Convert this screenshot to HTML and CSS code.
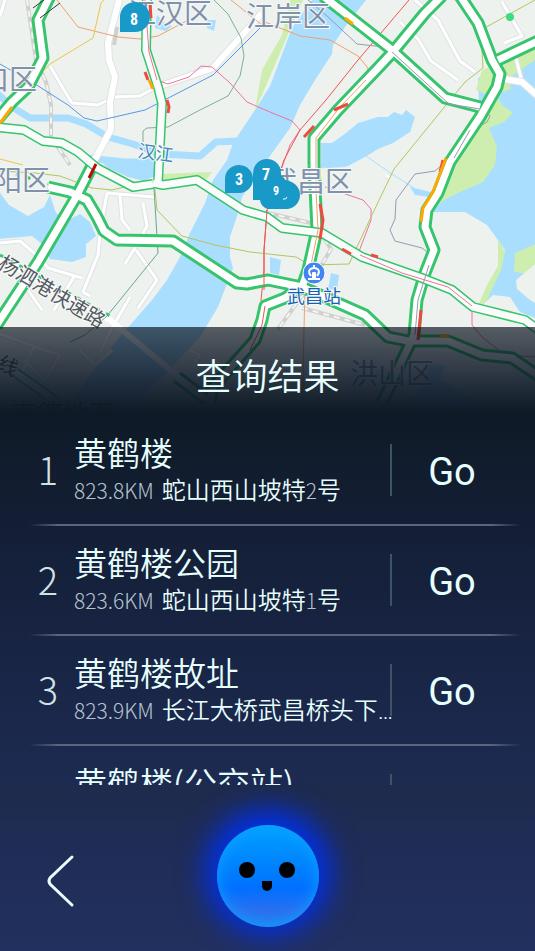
FILE: index.html
```
<!DOCTYPE html>
<html lang="zh-CN">
<head>
    <meta charset="utf-8">
    <meta name="viewport" content="width=device-width, initial-scale=1">
    <title>查询结果</title>
    <link rel="stylesheet" href="styles.css">
</head>
<body>
    <div class="screen">
        <svg class="map" viewBox="0 0 535 420" preserveAspectRatio="xMidYMin slice" role="img" aria-label="武汉地图">
            <defs>
                <g id="roads">
                    <path d="M50 -4L38 20L43 58L28 87L12 102L-4 121"/>
                    <path d="M-4 322L38 258L75 195L93 160" transform="translate(0 4)"/>
                    <path d="M48 187L70 192L87 200L97 217L104 231L117 240L173 241L237 283L247 284L268 280L302 287L365 315L388 337L408 341L448 341L482 355L512 358L540 377"/>
                    <path d="M314 165L317 230L308 270L302 287L285 298L265 306L262 320L255 340L213 387L210 403"/>
                    <path d="M442 -4L425 13L392 53L378 68L338 110L314 138L314 165"/>
                    <path d="M323 -4L392 50L445 98L480 107"/>
                    <path d="M540 40L498 60"/>
                    <path d="M460 -4L478 23L492 60L500 74L497 87L480 117L450 162L438 193L427 210L425 227L434 250L425 273L417 300L414 335L382 403"/>
                    <path d="M177 377L207 400"/>
                </g>
                <g id="streets">
                    <path d="M-4 127L24 130L43 141L62 143L78 152L97 168L133 187L153 184"/>
                    <path d="M153 183L163 185L197 180L243 210L267 217L282 228L322 233L362 257L422 278L452 290L473 307L525 320L540 331"/>
                    <path d="M147 -4L146 50L158 87L162 103L158 182"/>
                    <path d="M12 370L57 402"/>
                </g>
            </defs>
            <rect class="land" width="535" height="420"/>

            <path class="park" d="M303 0L292 25L265 88L255 110L262 70L282 35L290 0z"/>
            <path class="park" d="M160 174L212 172L205 181L190 180L165 184z"/>
            <path class="water" d="M366 0L345 27L333 45L332 54L315 80L300 105L290 128L265 163L242 197L238 213L230 237L230 257L233 268L218 307L200 337L140 400L128 420L60 420L77 393L117 340L152 300L167 280L180 257L190 233L205 203L213 180L227 160L233 143L255 110L270 86L292 28L312 0z"/>
            <path class="stream" d="M-2 94L12 107L30 118L68 118L86 124L108 137L133 144L160 154L200 156L216 142L238 141"/>
            <path class="stream" d="M86 158L125 162L160 162"/>
            <path class="water" d="M321 143L332 143L346 133L358 123L378 117L388 117L394 112L402 115L406 110L415 117L410 132L393 143L378 149L365 157L348 166L321 168z"/>
            <path class="brook" d="M366 156L392 174L414 188"/>
            <path class="water" d="M410 187L431 192L430 197L415 195z"/>
            <path class="water" d="M478 78L535 50L535 420L520 420L520 320L482 305L498 270L505 250L498 240L487 225L465 212L433 212L442 197L482 180z"/>
            <path class="park" d="M535 48L498 64L482 70L476 90L491 96L472 132L450 163L438 194L433 211L442 201L458 193L483 182L495 165L497 147L489 128L504 122L513 113L502 105L496 94L511 89L509 78L535 60z"/>
            <path class="park" d="M498 239L505 252L501 270L486 302L478 306L487 285L498 266z"/>
            <path class="park" d="M540 242L515 253L514 272L540 275z"/>
            <path class="land" d="M540 260L516 280L517 289L530 300L540 306z"/>
            <path class="land" d="M480 307L493 295L510 297L520 312L540 320L540 420L485 420z"/>
            <path class="water" d="M-2 190L9 205L28 216L44 207L50 195L56 213L68 220L80 214L90 222L96 236L86 244L86 257L72 262L50 259L42 244L32 236L-2 239z"/>
            <path class="water" d="M99 160L160 160L157 175L144 181L128 177L108 168z"/>
            <path class="water" d="M157 15L164 22L172 26L166 31L155 28z"/>
            <path class="water" d="M207 20L216 20L214 31L207 28z"/>
            <path class="water" d="M323 160L358 160L345 167L326 168z"/>
            <path class="water" d="M270 257L281 260L279 275L270 273z"/>
            <path class="water" d="M331 273L339 275L337 290L328 289z"/>
            <path class="water" d="M429 363L445 366L440 380L455 388L487 408L420 415L404 402L423 388z"/>

            <g class="lane-edge">
                <path d="M0 243L20 241L40 258L48 268L82 278M107 193L100 232L98 255L83 292L90 296M75 275L54 310M28 290L42 310M120 195L122 220L130 230M143 203L147 226L136 246L125 264M136 250L150 270L157 280L138 308M130 297L112 328L100 352M5 0L0 16M50 66L64 90L72 103L98 105L114 97L140 96L165 82M107 193L154 197"/>
                <path d="M400 22L418 39L431 61L458 80M415 0L438 20L460 61L475 72M502 2L522 36L504 43M516 58L521 78L510 82M390 178L386 175"/>
                <path d="M0 334L30 345L60 355L45 380L23 360M35 345L18 380M80 350L95 365L112 350M190 350L200 355L192 368"/>
            </g>
            <g class="lane">
                <path d="M0 243L20 241L40 258L48 268L82 278M107 193L100 232L98 255L83 292L90 296M75 275L54 310M28 290L42 310M120 195L122 220L130 230M143 203L147 226L136 246L125 264M136 250L150 270L157 280L138 308M130 297L112 328L100 352M5 0L0 16M50 66L64 90L72 103L98 105L114 97L140 96L165 82M107 193L154 197"/>
                <path d="M400 22L418 39L431 61L458 80M415 0L438 20L460 61L475 72M502 2L522 36L504 43M516 58L521 78L510 82M390 178L386 175"/>
                <path d="M0 334L30 345L60 355L45 380L23 360M35 345L18 380M80 350L95 365L112 350M190 350L200 355L192 368"/>
            </g>
            <path class="avenue-edge" d="M120 -4L108 43L109 60L115 77L110 102L111 129L92 165M160 86L213 68L262 13M498 78L522 82L540 98"/>
            <path class="avenue" d="M120 -4L108 43L109 60L115 77L110 102L111 129L92 165M160 86L213 68L262 13M498 78L522 82L540 98"/>
            <path class="avenue" d="M-4 256L110 320L180 378"/>

            <path class="rail" d="M27 0L36 60L46 82L51 105L51 137L70 165"/>
            <path class="rail-dash" d="M27 0L36 60L46 82L51 105L51 137L70 165"/>
            <path class="rail" d="M117 27L114 45"/>
            <path class="rail" d="M268 213L315 224L331 249L310 285L278 329M302 308L365 325"/>
            <path class="rail-dash" d="M268 213L315 224L331 249L310 285L278 329M302 308L365 325"/>

            <g class="metro">
                <path class="orange" d="M57 0L78 27L118 37L140 39L158 36L194 17M231 0L262 25M265 22L300 36L330 40L358 56L368 68L366 80L340 107L315 140L314 190L316 230L305 285L302 420"/>
                <path class="gold" d="M106 -2L101 3L93 38L50 64L0 116M0 159L23 165"/>
                <path class="teal" d="M214 0L228 14L241 38L244 56L240 76L228 96L198 111L168 127L147 128L143 131L143 142"/>
                <path class="blue" d="M0 64L35 84L68 105L84 118L97 121L145 110L213 75L262 26"/>
                <path class="pink" d="M143 0L147 50L156 80L168 84L189 77L201 66L212 67L230 83L247 102L270 112L292 121L300 130L290 145L281 170"/>
                <path class="pink" d="M325 187L363 200L371 209L371 220L358 254L402 274L448 288L472 306L472 325L482 337L505 355L535 357"/>
                <path class="red" d="M409 0L358 60L326 100L300 130L284 160L267 210L264 250L264 270L261 300L265 315L255 350"/>
                <path class="olive" d="M0 171L35 173L60 176L92 188L112 190L145 182L155 190L157 210L182 236L215 245L250 252L296 257L310 265L349 264L371 217L394 169L442 110L465 82L483 68L481 30L535 0"/>
                <path class="green" d="M154 188L158 253L107 316L85 335L70 342"/>
                <path class="gray" d="M308 0L327 16L357 44L375 46L391 47L410 63L449 104L484 109L490 116L487 122L468 133L450 158L435 171L415 174L396 200L395 219L390 230L395 241L422 248L430 254L425 272L417 300L414 335"/>
            </g>

            <use class="green-edge" href="#roads"/>
            <use class="road" href="#roads"/>
            <use class="street-edge" href="#streets"/>
            <use class="street" href="#streets"/>
            <g class="metro">
                <path class="orange" d="M366 80L340 107L316 138L316 190L318 230L308 280"/>
                <path class="gray" d="M392 52L449 104L480 109M470 130L454 158M429 265L418 300L415 335"/>
                <path class="pink" d="M145 0L149 52L157 80M360 255L402 273L448 287L472 306"/>
                <path class="red" d="M267 210L264 250L264 290M265 306L262 325L250 350"/>
            </g>
            <g class="jam">
                <path d="M150 5L151 18M145 72L148 80M167 100L169 107L168 113M334 110L348 104M304 137L314 126M440 172L443 160M320 204L323 220L320 239M342 249L351 254M371 255L378 257M421 310L418 340"/>
                <path class="dark" d="M89 178L96 164"/>
                <path class="slow" d="M149 80L153 89M12 107L0 123M345 18L353 24M446 158L433 192L423 208L421 222M440 336L449 336"/>
            </g>
            <path class="ramp" d="M33 8L48 -3M40 18L60 3"/>
            <circle class="dot" cx="510" cy="17" r="4"/>
            <path class="dash-green" d="M0 255L110 316M16 174L48 184"/>

            <g class="district">
                <text x="128" y="24">江汉区</text>
                <text x="246" y="27">江岸区</text>
                <text x="-19" y="90">口区</text>
                <text x="-6" y="191">阳区</text>
                <text x="269" y="192">武昌区</text>
                <text x="350" y="384">洪山区</text>
            </g>
            <text class="river-name" x="137" y="157" transform="rotate(8 137 157)">汉江</text>
            <text class="road-name" x="-3" y="267" transform="rotate(31 -3 267)">杨泗港快速路</text>
            <text class="road-name" x="-4" y="368" transform="rotate(25 -4 368)">线</text>
            <text class="brand" x="11" y="424">高德地图</text>
            <circle class="station" cx="314" cy="273" r="11"/>
            <path class="station-mark" d="M311 276C307 271 310 268 314 268S321 271 317 276M308 279H320M313 278V273H315V278M314 265V268"/>
            <text class="station-name" x="287" y="303">武昌站</text>

            <g class="pin">
                <path d="M120 32V18A15 15 0 1 1 135 32z"/>
                <path d="M225 193V178A14 14 0 1 1 239 193z"/>
                <path d="M253 200V173A14 14 0 0 1 281 173V180A14 14 0 0 1 286 209H268A10 10 0 0 1 260 200z"/>
                <path d="M262 205V192A13 13 0 0 1 286 181A14 14 0 0 1 286 209H270z"/>
                <text x="134" y="25">8</text>
                <text x="239" y="185">3</text>
                <text x="266" y="180">7</text>
                <text class="small" x="276" y="195">9</text>
                <path class="tail" d="M283 199Q286 200 287 197"/>
            </g>
        </svg>

        <main class="panel">
            <h1 class="panel-title">查询结果</h1>
            <ol class="results">
                <li class="result">
                    <span class="number">1</span>
                    <div class="info">
                        <h2>黄鹤楼</h2>
                        <p><span class="distance">823.8KM</span>蛇山西山坡特<span class="digit">2</span>号</p>
                    </div>
                    <button class="go" type="button">Go</button>
                </li>
                <li class="result">
                    <span class="number">2</span>
                    <div class="info">
                        <h2>黄鹤楼公园</h2>
                        <p><span class="distance">823.6KM</span>蛇山西山坡特<span class="digit">1</span>号</p>
                    </div>
                    <button class="go" type="button">Go</button>
                </li>
                <li class="result">
                    <span class="number">3</span>
                    <div class="info">
                        <h2>黄鹤楼故址</h2>
                        <p><span class="distance">823.9KM</span>长江大桥武昌桥头下黄鹤楼</p>
                    </div>
                    <button class="go" type="button">Go</button>
                </li>
                <li class="result">
                    <span class="number"></span>
                    <div class="info">
                        <h2>黄鹤楼(公交站)</h2>
                    </div>
                    <button class="go" type="button">Go</button>
                </li>
            </ol>
            <footer class="bar">
                <button class="back" type="button" aria-label="返回">
                    <svg width="30" height="54" viewBox="0 0 30 54"><path d="M26 3L4 24Q2 27 4 30L26 51"/></svg>
                </button>
                <button class="assistant" type="button" aria-label="语音助手">
                    <svg width="102" height="102" viewBox="0 0 102 102">
                        <circle cx="30" cy="45" r="8"/>
                        <circle cx="70" cy="45" r="8"/>
                        <path d="M45 56H55V61A5 5 0 0 1 45 61z"/>
                    </svg>
                </button>
            </footer>
        </main>
    </div>
</body>
</html>
```
FILE: styles.css
```
* {
    box-sizing: border-box;
}
body {
    margin: 0;
    font-family: "Noto Sans CJK SC", sans-serif;
    background: #22305f;
    color: #e6fffe;
}
h1, h2, p, ol {
    margin: 0;
    padding: 0;
    font-weight: 350;
}
button {
    padding: 0;
    border: 0;
    background: none;
    color: inherit;
    cursor: pointer;
}
.screen {
    position: relative;
    display: flex;
    flex-direction: column;
    height: 100vh;
    padding-top: 327px;
    overflow: hidden;
}

/* map */
.map {
    position: absolute;
    top: 0;
    left: 0;
    width: 100%;
    min-height: 420px;
}
.map path, .map use {
    stroke-linejoin: round;
}
.land { fill: #edf2ef; }
.water { fill: #aadeff; }
.park { fill: #cdeeae; }
.stream {
    fill: none;
    stroke: #aadeff;
    stroke-width: 7;
}
.brook {
    fill: none;
    stroke: #aadeff;
}
.lane-edge, .avenue-edge {
    fill: none;
    stroke: #dfe3e5;
    stroke-width: 5;
}
.lane {
    fill: none;
    stroke: #fff;
    stroke-width: 3;
}
.avenue-edge { stroke-width: 8; }
.avenue {
    fill: none;
    stroke: #fff;
    stroke-width: 6;
}
.rail {
    fill: none;
    stroke: #d0d0d0;
    stroke-width: 4;
}
.rail-dash {
    fill: none;
    stroke: #f4f4f0;
    stroke-width: 2;
    stroke-dasharray: 6 5;
}
.metro {
    fill: none;
    stroke-width: 1;
}
.orange { stroke: #f0a070; }
.gold { stroke: #eec44c; }
.teal { stroke: #7fae98; }
.blue { stroke: #5b95e6; }
.pink { stroke: #ee7398; }
.red { stroke: #f25454; }
.olive { stroke: #b2c65e; }
.green { stroke: #6aa58e; }
.gray { stroke: #939dab; }
.green-edge {
    fill: none;
    stroke: #36c46c;
    stroke-width: 13;
}
.road {
    fill: none;
    stroke: #fff;
    stroke-width: 7;
}
.street-edge {
    fill: none;
    stroke: #36c46c;
    stroke-width: 10;
}
.street {
    fill: none;
    stroke: #fafcfb;
    stroke-width: 7;
}
.jam {
    fill: none;
    stroke: #f04a3e;
    stroke-width: 3;
}
.jam .dark { stroke: #b80c0c; }
.jam .slow { stroke: #ffa800; }
.ramp {
    stroke: #333;
    stroke-width: 1;
}
.dot { fill: #3edc81; }
.dash-green {
    fill: none;
    stroke: #36c46c;
    stroke-width: 3;
    stroke-dasharray: 4 7;
}
.map text {
    paint-order: stroke;
    stroke: #f5f8f8;
    stroke-width: 2;
}
.district {
    font-size: 28px;
    fill: #8191aa;
}
.map .river-name {
    font-size: 18px;
    fill: #4488bd;
}
.map .road-name {
    font-size: 20px;
    fill: #555a60;
}
.map .brand {
    font-size: 26px;
    fill: #345;
}
.map .station-name {
    font-size: 18px;
    fill: #1862b4;
}
.station {
    fill: #4285f0;
    stroke: #fff;
}
.station-mark {
    fill: none;
    stroke: #fff;
    stroke-width: 2;
}
.pin {
    fill: #1899c7;
}
.map .pin text {
    font: 700 16px "Roboto Condensed", "Liberation Sans Narrow", "Roboto", sans-serif;
    fill: #fff;
    stroke: none;
    text-anchor: middle;
}
.map .pin .small {
    font-size: 12px;
}
.tail {
    fill: none;
    stroke: #fff;
}

/* results */
.panel {
    position: relative;
    flex: 1;
    min-height: 0;
    display: flex;
    flex-direction: column;
}
.panel-title {
    height: 89px;
    padding-top: 20px;
    background: linear-gradient(rgba(4, 12, 24, .65), rgba(12, 23, 38, .88) 60%, #0f1a27 96%);
    font-size: 36px;
    line-height: 54px;
    text-align: center;
}
.results {
    flex: 1;
    min-height: 0;
    padding: 0 15px 0 30px;
    overflow: hidden;
    list-style: none;
    background: linear-gradient(#0f1a27, #15203a 40%, #1d2b52);
}
.result {
    display: grid;
    grid-template-columns: 36px minmax(0, 1fr) 130px;
    column-gap: 8px;
    align-items: center;
    height: 110px;
    border-bottom: 2px solid;
    border-image: linear-gradient(90deg, transparent, #5c657d 6%, #5c657d 94%, transparent) 1;
}
.number {
    padding-bottom: 3px;
    font-size: 38px;
    font-weight: 250;
    line-height: 54px;
    text-align: center;
    color: #cfe2e6;
}
.info {
    align-self: start;
    padding-top: 16px;
    margin-right: -12px;
}
.info h2 {
    font-size: 33px;
    line-height: 40px;
}
.info p {
    overflow: hidden;
    font-family: "Roboto", "Noto Sans CJK SC", sans-serif;
    font-size: 24px;
    line-height: 36px;
    white-space: nowrap;
    text-overflow: ellipsis;
}
.distance, .digit {
    font-family: "Noto Sans CJK SC", sans-serif;
    font-size: 21px;
    font-weight: 250;
    color: #b4c4cf;
}
.distance {
    margin-right: 8px;
}
.go {
    height: 52px;
    padding: 4px 8px 0 0;
    border-left: 2px solid #3c5368;
    font-family: "Roboto", sans-serif;
    font-size: 38px;
    line-height: 48px;
}

/* bottom bar */
.bar {
    display: grid;
    grid-template-columns: 1fr 102px 1fr;
    align-items: center;
    height: 166px;
    padding: 16px 0 0;
    background: linear-gradient(#1e2b4c, #1f2c55 30%, #22305f);
}
.back {
    justify-self: start;
    margin: 10px 0 0 46px;
    line-height: 0;
}
.back path {
    fill: none;
    stroke: #e6fffe;
    stroke-width: 3;
    stroke-linecap: round;
}
.assistant {
    height: 102px;
    border-radius: 50%;
    line-height: 0;
    background: linear-gradient(#00a2ff, #0070ff 62%, #2c70f0 85%, #2080f0);
    box-shadow: inset 0 0 16px #10a0ff, 0 -4px 28px 12px #0030e8;
}
```
